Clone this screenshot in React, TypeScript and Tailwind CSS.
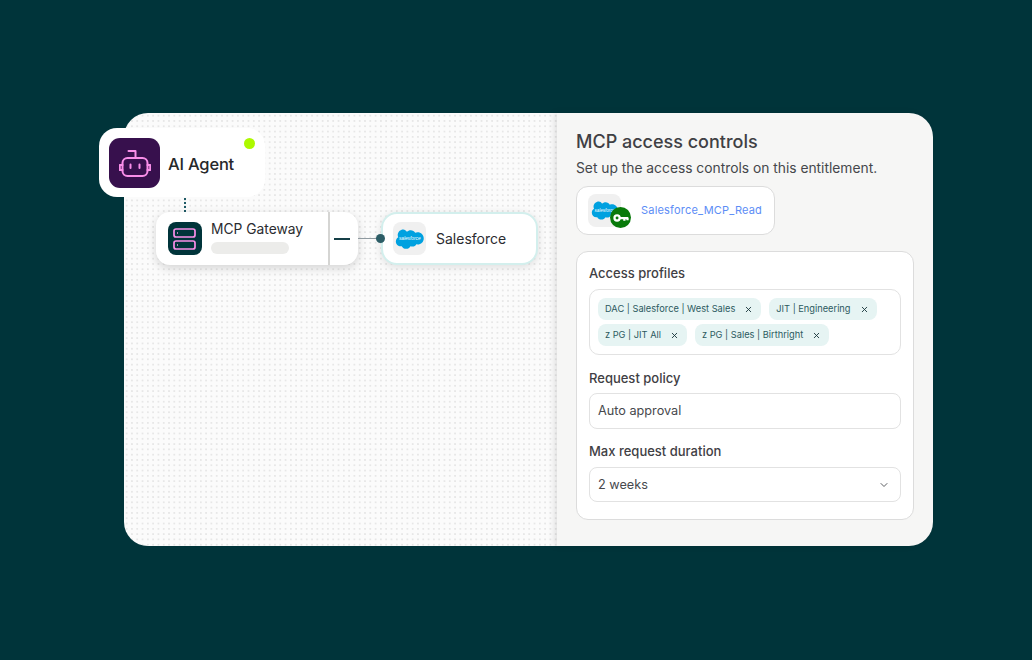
import { ChevronDown, X } from 'lucide-react';

const profiles = [
  ['DAC | Salesforce | West Sales', 'JIT | Engineering'],
  ['z PG | JIT All', 'z PG | Sales | Birthright'],
];

function SalesforceCloud({ className }: { className?: string }) {
  return (
    <svg viewBox="0 0 34 24" className={className}>
      <path
        fill="#00a1e0"
        d="M14 4.200C15.100 3 16.700 2.300 18.400 2.300C20.700 2.300 22.700 3.500 23.700 5.400C24.600 5 25.500 4.800 26.500 4.800C30.500 4.800 33.700 8 33.700 11.900C33.700 15.800 30.500 19 26.500 19C26 19 25.500 18.900 25.100 18.800C24.200 20.400 22.500 21.500 20.500 21.500C19.700 21.500 18.900 21.300 18.200 21C17.300 23 15.300 24 13.100 24C10.800 24 8.800 22.900 7.900 21C7.500 21.100 7.100 21.100 6.700 21.100C3.600 21.100 1 18.600 1 15.400C1 13.300 2.100 11.500 3.800 10.500C3.400 9.700 3.200 8.800 3.200 7.900C3.200 4.300 6.200 1.400 9.800 1.400C11.400 1.400 12.900 2.500 14 4.200Z"
      />
      <text x="17.300" y="14" textAnchor="middle" fontSize="5.600" fill="#ffffff" fontFamily="Liberation Sans, sans-serif" fontStyle="italic">
        salesforce
      </text>
    </svg>
  );
}

function Chip({ label }: { label: string }) {
  return (
    <span className="flex h-[22px] items-center whitespace-nowrap rounded-[8px] bg-[#e6f4f3] pl-[7px] pr-[8px] text-[9.250px] text-[#2c5a60]">
      {label}
      <X className="ml-[9px] h-[9px] w-[9px] text-[#17363b]" strokeWidth={2.4} />
    </span>
  );
}

function FieldLabel({ children }: { children: string }) {
  return <div className="text-[13px] font-medium leading-4 text-[#3f4044]">{children}</div>;
}

export default function App() {
  return (
    <div className="h-[660px] w-[1032px] overflow-hidden bg-[#00343a] pl-[124px] pt-[113px] font-['Inter',sans-serif]">
      <div className="flex h-[433px] w-[809px]">
        {/* diagram canvas */}
        <div className="relative w-[433px] rounded-l-[24px] bg-[#fbfbfb] bg-[radial-gradient(circle,#e4e4e4_0.6px,transparent_0.8px)] bg-[size:5.300px_5.300px]">
          <div className="absolute left-[-25px] top-[15px] flex h-[69px] w-[166px] items-center rounded-[18px] bg-white pl-[10px]">
            <div className="flex h-[50px] w-[51px] items-center justify-center rounded-[11px] bg-[#37104d]">
              <svg viewBox="0 0 32 32" className="h-8 w-8" fill="none" stroke="#f98ee9" strokeWidth="2" strokeLinejoin="round" strokeLinecap="round">
                <path d="M16.500 11V4H9.500" />
                <rect x="3.500" y="11" width="25" height="18" rx="5" />
                <path d="M3.500 18H0.800V23H3.500M28.500 18H31.200V23H28.500M11.500 17.500V21M20.500 17.500V21" />
              </svg>
            </div>
            <span className="ml-2 pt-[3px] text-[16.500px] font-medium tracking-[-0.2px] text-[#26282b]">AI Agent</span>
            <span className="absolute right-[10px] top-[10px] h-[11px] w-[11px] rounded-full bg-[#adf900]" />
          </div>

          <div className="absolute left-[60px] top-[85px] h-[14px] w-0 border-l-2 border-dotted border-[#1f5a66]" />

          <div className="absolute left-[32px] top-[99px] flex h-[53px] w-[202px] items-center rounded-[14px] bg-white shadow-[0_3px_10px_rgba(0,0,0,0.16)]">
            <div className="ml-3 flex h-[33px] w-[34px] items-center justify-center rounded-[8px] bg-[#00343a]">
              <svg viewBox="0 0 34 33" className="h-[33px] w-[34px]" fill="none" stroke="#f98ee9" strokeWidth="1.700">
                <rect x="6" y="7" width="21" height="8" rx="2" />
                <rect x="6" y="19" width="21" height="8" rx="2" />
                <path d="M9 11H10M9 23H10" />
              </svg>
            </div>
            <div className="ml-[9px] w-[117px] pb-[3px]">
              <div className="text-[13.800px] leading-[18px] text-[#2b2c30]">MCP Gateway</div>
              <div className="mt-[4px] h-3 w-[78px] rounded-full bg-[#ececea]" />
            </div>
            <div className="h-full w-[2px] bg-[#d5d5d3]" />
            <div className="ml-[4px] h-[2px] w-[16px] bg-[#153f47]" />
          </div>

          <div className="absolute left-[234px] top-[125px] h-px w-[22px] bg-[#8f9aa0]" />

          <div className="absolute left-[257px] top-[99px] flex h-[53px] w-[157px] items-center rounded-[16px] border-2 border-[#d3efed] bg-white pl-[10px] shadow-[0_2px_8px_rgba(0,0,0,0.12)]">
            <div className="flex h-[33px] w-[33px] items-center justify-center rounded-[8px] bg-[#f0f0f0]">
              <SalesforceCloud className="h-[21px] w-[29px]" />
            </div>
            <span className="ml-[10px] text-[14px] text-[#2b2c30]">Salesforce</span>
          </div>

          <div className="absolute left-[252px] top-[121px] h-[9px] w-[9px] rounded-full bg-[#2c5d66]" />
        </div>

        {/* access panel */}
        <div className="z-10 w-[376px] rounded-r-[24px] bg-[#f6f6f5] pl-[19px] pr-5 pt-[18px] shadow-[-3px_0_6px_rgba(0,0,0,0.1)]">
          <h1 className="text-[18px] font-medium leading-[22px] text-[#3f4044]">MCP access controls</h1>
          <p className="mt-[5px] text-[13.800px] leading-[20px] text-[#45474b]">Set up the access controls on this entitlement.</p>

          <div className="mt-2 flex h-[49px] w-[199px] items-center rounded-[12px] border border-[#dcdcdc] bg-white pl-[11px]">
            <div className="relative flex h-[33px] w-[33px] items-center justify-center rounded-[8px] bg-[#f0f0f0]">
              <SalesforceCloud className="absolute left-[3px] top-[6px] h-[20px] w-[27px]" />
              <div className="absolute left-[22px] top-[13px] flex h-[21px] w-[21px] items-center justify-center rounded-full bg-[#087a0a]">
                <svg viewBox="0 0 16 16" className="h-[18px] w-[18px]" fill="none" stroke="#ffffff" strokeWidth="2">
                  <circle cx="4.500" cy="8" r="2.300" />
                  <path d="M6.800 8H14.500M11 8V10.500M13.800 8V10" />
                </svg>
              </div>
            </div>
            <span className="ml-5 text-[11px] tracking-[0.2px] text-[#5c8df6]">Salesforce_MCP_Read</span>
          </div>

          <div className="mt-[16px] h-[269px] w-[338px] rounded-[12px] border border-[#dcdcdc] bg-white px-3 pt-[13px]">
            <FieldLabel>Access profiles</FieldLabel>
            <div className="mt-[8px] flex h-[66px] flex-col gap-[4px] rounded-[10px] border border-[#e2e2e2] px-2 pt-2">
              {profiles.map((row) => (
                <div key={row[0]} className="flex gap-2">
                  {row.map((label) => (
                    <Chip key={label} label={label} />
                  ))}
                </div>
              ))}
            </div>

            <div className="mt-[15px]">
              <FieldLabel>Request policy</FieldLabel>
            </div>
            <div className="mt-[7px] flex h-9 items-center rounded-[8px] border border-[#e2e2e2] px-2 text-[12.700px] text-[#47494d]">
              Auto approval
            </div>

            <div className="mt-[14px]">
              <FieldLabel>Max request duration</FieldLabel>
            </div>
            <div className="mt-[8px] flex h-[35px] items-center justify-between rounded-[8px] border border-[#e2e2e2] pl-2 pr-[10px] text-[12.700px] text-[#47494d]">
              2 weeks
              <ChevronDown className="h-3 w-3 text-[#5c5e62]" />
            </div>
          </div>
        </div>
      </div>
    </div>
  );
}
